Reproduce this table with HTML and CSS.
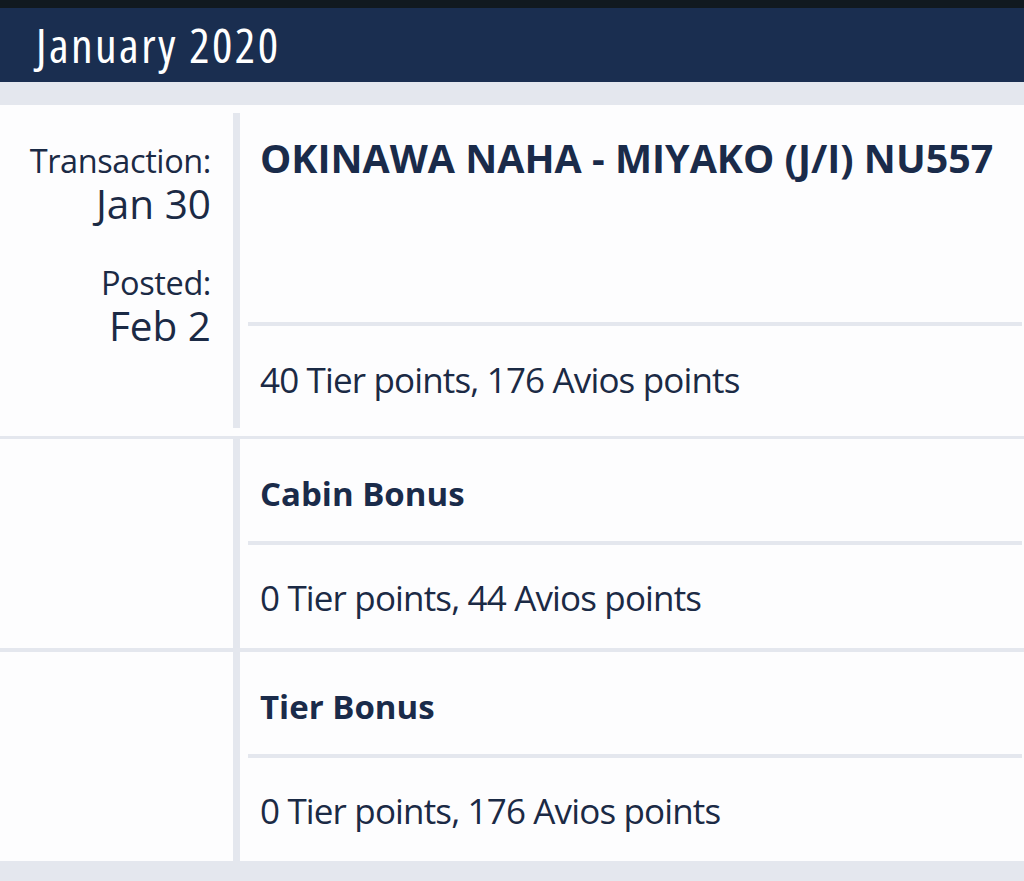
FILE: index.html
```html
<!DOCTYPE html>
<html lang="en">
<head>
<meta charset="utf-8">
<title>January 2020</title>
<link rel="stylesheet" href="styles.css">
</head>
<body>
<div class="topbar"></div>
<header class="month">January 2020</header>
<div class="band"></div>
<section class="row row-first">
  <div class="dates">
    <div class="label">Transaction:</div>
    <div class="date">Jan 30</div>
    <div class="label label-gap">Posted:</div>
    <div class="date">Feb 2</div>
  </div>
  <div class="main main-first">
    <div class="title title-first">OKINAWA NAHA - MIYAKO (J/I) NU557</div>
    <div class="sep"></div>
    <div class="value">40 Tier points, 176 Avios points</div>
  </div>
</section>
<section class="row row-second">
  <div class="dates"></div>
  <div class="main">
    <div class="title">Cabin Bonus</div>
    <div class="sep"></div>
    <div class="value">0 Tier points, 44 Avios points</div>
  </div>
</section>
<section class="row row-last">
  <div class="dates"></div>
  <div class="main">
    <div class="title">Tier Bonus</div>
    <div class="sep"></div>
    <div class="value">0 Tier points, 176 Avios points</div>
  </div>
</section>
<div class="band band-bottom"></div>
</body>
</html>
```
FILE: styles.css
```css
html, body {
  margin: 0;
  padding: 0;
  background: #fdfdfe;
  height: 881px;
  overflow: hidden;
}
body {
  font-family: "Open Sans", "Noto Sans", sans-serif;
  color: #1b2a45;
}
.topbar {
  height: 8px;
  background: #11191f;
}
.month {
  height: 74px;
  background: #1a2e50;
  color: #ffffff;
  display: flex;
  align-items: center;
  padding-left: 36px;
  font-size: 48px;
  font-weight: 400;
  font-stretch: 75%;
  letter-spacing: 2.4px;
  line-height: 1;
}
.band {
  height: 23px;
  background: #e4e7ee;
}
.band-bottom {
  height: 20px;
}
.row {
  display: flex;
  border-bottom: 3px solid #e4e7ee;
}
.row-second {
  border-bottom-width: 4px;
}
.row-last {
  border-bottom: 0;
}
.dates {
  width: 233px;
  flex: none;
  box-sizing: border-box;
  padding: 36px 22px 0 0;
  text-align: right;
}
.label {
  font-size: 32.5px;
  line-height: 40px;
  letter-spacing: -0.4px;
}
.label-gap {
  margin-top: 37px;
}
.date {
  font-size: 40.5px;
  line-height: 45px;
}
.main {
  flex: 1;
  border-left: 7px solid #e4e7ee;
  display: flex;
  flex-direction: column;
}
.main-first {
  margin: 8px 0;
}
.title {
  height: 102px;
  box-sizing: border-box;
  padding: 6px 0 0 20px;
  display: flex;
  align-items: center;
  font-size: 33px;
  font-weight: 700;
  color: #1a2b4a;
  white-space: nowrap;
}
.title-first {
  height: 209px;
  align-items: flex-start;
  padding-top: 21px;
  font-size: 39.4px;
  line-height: 48px;
}
.sep {
  height: 4px;
  background: #e4e7ee;
  margin: 0 2px 0 8px;
}
.value {
  height: 102px;
  box-sizing: border-box;
  display: flex;
  align-items: center;
  padding: 4px 0 0 20px;
  font-size: 35px;
  letter-spacing: -0.85px;
  white-space: nowrap;
}
.row-second .value,
.row-last .value {
  height: 103px;
  padding-top: 2px;
}
```
